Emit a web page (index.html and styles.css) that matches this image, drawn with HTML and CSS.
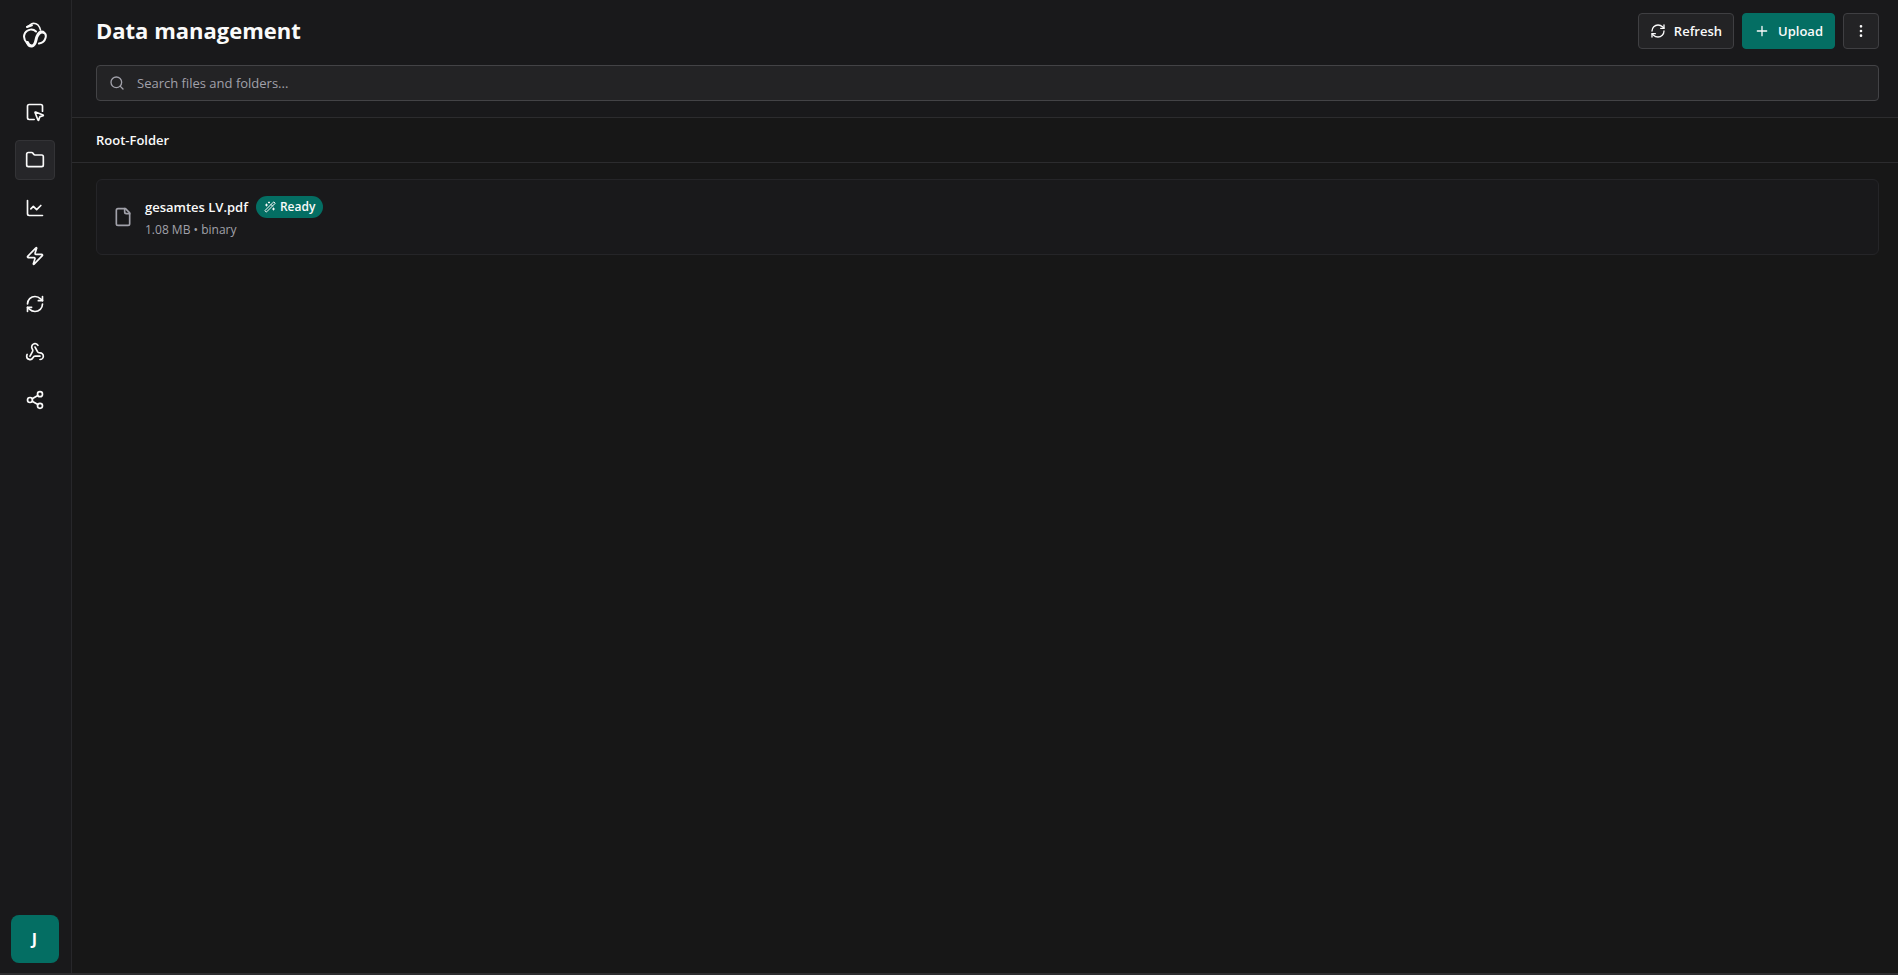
FILE: index.html
```html
<!doctype html>
<html lang="en">
  <head>
    <meta charset="utf-8">
    <title>Data management</title>
    <link rel="stylesheet" href="styles.css">
  </head>
  <body>
    <div class="app">
      <nav class="sidebar">
        <a class="logo" href="#" aria-label="Home">
          <svg viewBox="0 0 24 26">
            <path d="M4 4.800C6.500 4.200 7.500 1.400 10.500 1.200c3.500 0 6 2.800 7 6.800" stroke-width="1.500"/>
            <path d="M4 5l5-1.800" stroke-width="2"/>
            <path d="M13 9.500C10 6.500 4.500 7 2 11c-2 4-.5 7.500 2 10" stroke-width="2"/>
            <path d="M4.500 20.500c.8 2.500 2.500 3.700 4.500 3.500 4-.5 3.500-6 5-9.500 1.800-4 4.500-4.800 6-4.300" stroke-width="3"/>
            <path d="M20 10.200c2.500.8 3.300 3 2.500 5.800-.8 3-3 5-6.500 5.500" stroke-width="2"/>
          </svg>
        </a>
        <a class="nav-item" href="#" aria-label="Workspace">
          <svg viewBox="0 0 24 24"><path d="M12.034 12.681a.498.498 0 0 1 .647-.647l9 3.500a.5.5 0 0 1-.033.943l-3.444 1.068a1 1 0 0 0-.66.660l-1.067 3.443a.5.5 0 0 1-.943.033z"/><path d="M21 11V5a2 2 0 0 0-2-2H5a2 2 0 0 0-2 2v14a2 2 0 0 0 2 2h6"/></svg>
        </a>
        <a class="nav-item active" href="#" aria-label="Data management">
          <svg viewBox="0 0 24 24"><path d="M20 20a2 2 0 0 0 2-2V8a2 2 0 0 0-2-2h-7.900a2 2 0 0 1-1.690-.9L9.600 3.900A2 2 0 0 0 7.930 3H4a2 2 0 0 0-2 2v13a2 2 0 0 0 2 2Z"/></svg>
        </a>
        <a class="nav-item" href="#" aria-label="Analytics">
          <svg viewBox="0 0 24 24"><path d="M3 3v16a2 2 0 0 0 2 2h16"/><path d="m19 9-5 5-4-4-3 3"/></svg>
        </a>
        <a class="nav-item" href="#" aria-label="Actions">
          <svg viewBox="0 0 24 24"><path d="M4 14a1 1 0 0 1-.78-1.630l9.900-10.200a.5.5 0 0 1 .86.460l-1.920 6.020A1 1 0 0 0 13 10h7a1 1 0 0 1 .78 1.630l-9.900 10.200a.5.5 0 0 1-.86-.46l1.920-6.020A1 1 0 0 0 11 14z"/></svg>
        </a>
        <a class="nav-item" href="#" aria-label="Sync">
          <svg viewBox="0 0 24 24"><path d="M3 12a9 9 0 0 1 9-9 9.750 9.750 0 0 1 6.740 2.740L21 8"/><path d="M21 3v5h-5"/><path d="M21 12a9 9 0 0 1-9 9 9.750 9.750 0 0 1-6.740-2.740L3 16"/><path d="M8 16H3v5"/></svg>
        </a>
        <a class="nav-item" href="#" aria-label="Webhooks">
          <svg viewBox="0 0 24 24"><path d="M18 16.980h-5.990c-1.100 0-1.950.94-2.480 1.900A4 4 0 0 1 2 17c.01-.7.200-1.400.57-2"/><path d="m6 17 3.130-5.780c.53-.97.100-2.180-.5-3.100a4 4 0 1 1 6.890-4.060"/><path d="m12 6 3.130 5.730C15.660 12.700 16.900 13 18 13a4 4 0 0 1 0 8"/></svg>
        </a>
        <a class="nav-item" href="#" aria-label="Share">
          <svg viewBox="0 0 24 24"><circle cx="18" cy="5" r="3"/><circle cx="6" cy="12" r="3"/><circle cx="18" cy="19" r="3"/><path d="m8.590 13.510 6.830 3.980M15.410 6.510l-6.820 3.980"/></svg>
        </a>
        <button class="avatar" type="button">J</button>
      </nav>

      <main class="main">
        <header class="header">
          <div class="title-row">
            <h1>Data management</h1>
            <div class="actions">
              <button class="btn" type="button">
                <svg viewBox="0 0 24 24"><path d="M3 12a9 9 0 0 1 9-9 9.750 9.750 0 0 1 6.740 2.740L21 8"/><path d="M21 3v5h-5"/><path d="M21 12a9 9 0 0 1-9 9 9.750 9.750 0 0 1-6.740-2.740L3 16"/><path d="M8 16H3v5"/></svg>
                Refresh
              </button>
              <button class="btn primary" type="button">
                <svg viewBox="0 0 24 24"><path d="M5 12h14M12 5v14"/></svg>
                Upload
              </button>
              <button class="btn icon-only" type="button" aria-label="More">
                <svg viewBox="0 0 24 24"><circle cx="12" cy="12" r="1"/><circle cx="12" cy="5" r="1"/><circle cx="12" cy="19" r="1"/></svg>
              </button>
            </div>
          </div>
          <label class="search">
            <svg viewBox="0 0 24 24"><circle cx="11" cy="11" r="8"/><path d="m21 21-4.300-4.300"/></svg>
            <input type="text" placeholder="Search files and folders..." aria-label="Search files and folders">
          </label>
        </header>

        <div class="breadcrumb"><a href="#">Root-Folder</a></div>

        <div class="files">
          <div class="file">
            <svg class="file-icon" viewBox="0 0 24 24"><path d="M15 2H6a2 2 0 0 0-2 2v16a2 2 0 0 0 2 2h12a2 2 0 0 0 2-2V7Z"/><path d="M14 2v4a2 2 0 0 0 2 2h4"/></svg>
            <div class="file-info">
              <div class="file-name">
                <span>gesamtes LV.pdf</span>
                <span class="badge">
                  <svg viewBox="0 0 24 24"><path d="m21.640 3.640-1.280-1.280a1.210 1.210 0 0 0-1.720 0L2.360 18.640a1.210 1.210 0 0 0 0 1.720l1.280 1.280a1.200 1.200 0 0 0 1.720 0L21.640 5.360a1.200 1.200 0 0 0 0-1.720"/><path d="m14 7 3 3M5 6v4M19 14v4M10 2v2M7 8H3M21 16h-4M11 3H9"/></svg>
                  Ready
                </span>
              </div>
              <div class="file-meta">1.08 MB • binary</div>
            </div>
          </div>
        </div>
      </main>
    </div>
  </body>
</html>
```
FILE: styles.css
```css
* {
  box-sizing: border-box;
}

body {
  margin: 0;
  background-color: #171717;
  color: #fafafa;
  font-family: "Segoe UI", "Open Sans", "Noto Sans", sans-serif;
  font-size: 14px;
  line-height: 20px;
}

a {
  color: inherit;
  text-decoration: none;
}

svg {
  display: block;
  flex: none;
  width: 16px;
  height: 16px;
  fill: none;
  stroke: currentColor;
  stroke-width: 2;
  stroke-linecap: round;
  stroke-linejoin: round;
}

.app {
  display: flex;
  min-height: 100vh;
  border-bottom: 2px solid #2c2c2e;
}

/* sidebar */
.sidebar {
  flex: none;
  display: flex;
  flex-direction: column;
  align-items: center;
  gap: 8px;
  width: 72px;
  padding: 11px 2px 10px 0;
  background-color: #19191b;
  border-right: 1px solid #27272a;
}

.logo {
  display: flex;
  align-items: center;
  justify-content: center;
  width: 48px;
  height: 48px;
  margin-bottom: 25px;
}

.logo svg {
  width: 24px;
  height: 26px;
}

.nav-item {
  display: flex;
  align-items: center;
  justify-content: center;
  width: 40px;
  height: 40px;
  border: 1px solid transparent;
  border-radius: 4px;
}

.nav-item svg {
  width: 20px;
  height: 20px;
}

.nav-item.active {
  background-color: #262629;
  border-color: #333336;
}

.avatar {
  width: 48px;
  height: 48px;
  margin-top: auto;
  border: 0;
  border-radius: 8px;
  background-color: #046e63;
  color: #fff;
  font: inherit;
  font-size: 16px;
  font-weight: 700;
}

/* main */
.main {
  flex: 1;
  min-width: 0;
}

.header {
  display: flex;
  flex-direction: column;
  gap: 16px;
  padding: 13px 19px 16px 24px;
  background-color: #19191b;
  border-bottom: 1px solid #2c2c2e;
}

.title-row {
  display: flex;
  align-items: flex-start;
  justify-content: space-between;
}

h1 {
  margin: 0;
  font-size: 22px;
  line-height: 34px;
  font-weight: 700;
}

.actions {
  display: flex;
  gap: 8px;
}

.btn {
  display: flex;
  align-items: center;
  gap: 8px;
  height: 36px;
  padding: 0 11px;
  border: 1px solid #3f3f42;
  border-radius: 4px;
  background-color: #232325;
  color: #fafafa;
  font: inherit;
  font-size: 13px;
  font-weight: 600;
}

.btn.primary {
  background-color: #046e63;
  border-color: #046e63;
}

.btn.icon-only {
  justify-content: center;
  width: 36px;
  padding: 0;
}

.search {
  display: flex;
  align-items: center;
  gap: 12px;
  height: 36px;
  padding: 0 12px;
  border: 1px solid #434346;
  border-radius: 4px;
  background-color: #232325;
  color: #a1a1aa;
}

.search input {
  flex: 1;
  padding: 0;
  border: 0;
  outline: 0;
  background: none;
  color: #fafafa;
  font: inherit;
  font-size: 13px;
}

.search input::placeholder {
  color: #a1a1aa;
}

.breadcrumb {
  padding: 12px 24px;
  border-bottom: 1px solid #2c2c2e;
  font-size: 13px;
  font-weight: 600;
}

.files {
  padding: 16px 19px 16px 24px;
}

.file {
  display: flex;
  align-items: center;
  gap: 12px;
  padding: 16px;
  border: 1px solid #252528;
  border-radius: 6px;
  background-color: #19191b;
}

.file-icon {
  width: 20px;
  height: 20px;
  color: #a1a1aa;
}

.file-name {
  display: flex;
  align-items: center;
  gap: 8px;
  font-size: 13px;
  font-weight: 600;
}

.badge {
  display: flex;
  align-items: center;
  gap: 4px;
  height: 22px;
  padding: 0 8px;
  border-radius: 11px;
  background-color: #046e63;
  font-size: 12px;
}

.badge svg {
  width: 12px;
  height: 12px;
}

.file-meta {
  margin-top: 4px;
  color: #a1a1aa;
  font-size: 12px;
  line-height: 16px;
}
```
